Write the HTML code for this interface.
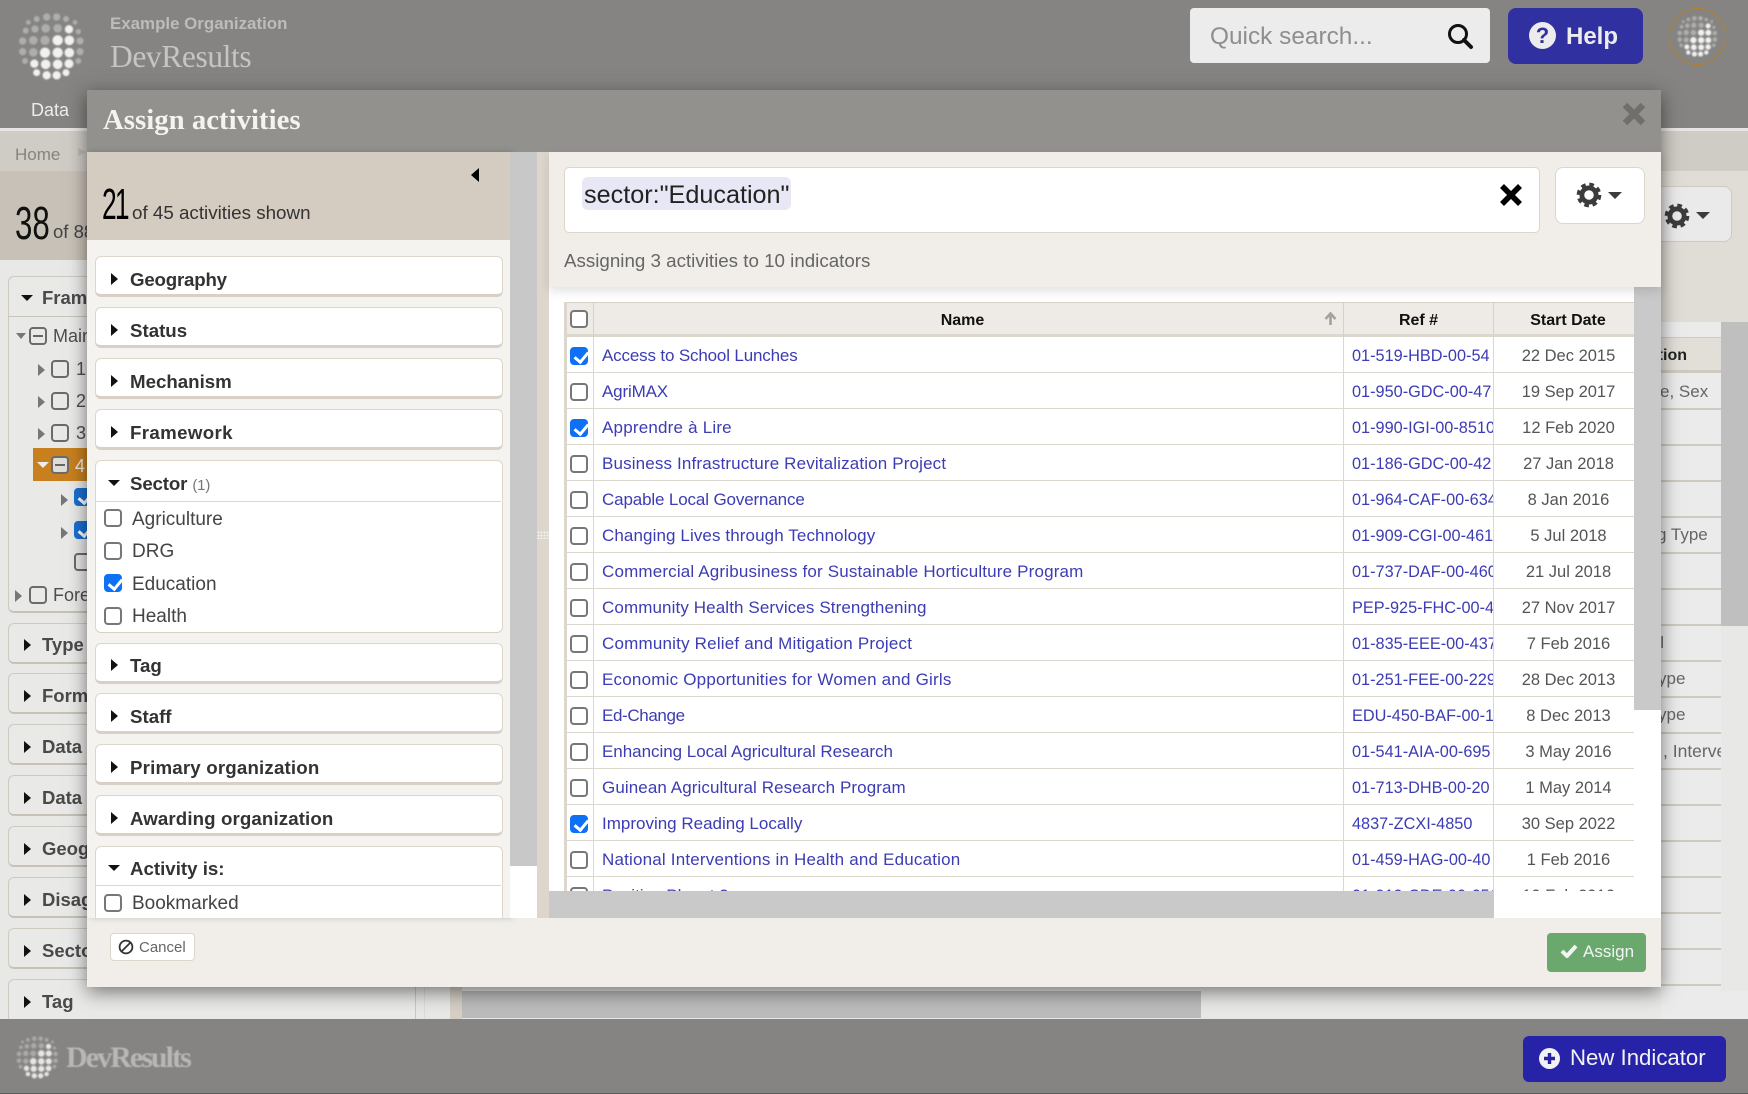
<!DOCTYPE html>
<html><head><meta charset="utf-8"><title>Assign activities</title>
<style>
*{box-sizing:border-box}
html,body{margin:0;padding:0}
body{width:1748px;height:1094px;overflow:hidden;position:relative;background:#e8e8e7;font-family:"Liberation Sans",sans-serif;color:#555}
.a{position:absolute}
.t{position:absolute;white-space:nowrap;line-height:24px;height:24px}
.slab{font-family:"Liberation Serif",serif}
.cb{position:absolute;width:18px;height:18px;border:2px solid #777;border-radius:4px;background:#fff}
.cb.on{background:#0d70f5;border-color:#0d70f5}
.cb.on:after{content:"";position:absolute;left:4.5px;top:0;width:6px;height:11px;border:solid #fff;border-width:0 3px 3px 0;transform:rotate(40deg)}
.cb.g{background:transparent;border-color:#6b6b6b}
.cb.m:after{content:"";position:absolute;left:2px;top:6px;width:10px;height:2px;background:#666}
.tr{position:absolute;width:0;height:0;border-top:6px solid transparent;border-bottom:6px solid transparent;border-left:7px solid #111}
.td{position:absolute;width:0;height:0;border-left:6px solid transparent;border-right:6px solid transparent;border-top:6px solid #111}
.p{position:absolute;left:95px;width:408px;background:#fff;border:1px solid #ddd6cb;border-bottom:3px solid #d8d0c4;border-radius:6px}
.ft{position:absolute;left:130px;font-weight:bold;font-size:18.7px;color:#333;line-height:25px;white-space:nowrap}
.lp{position:absolute;left:8px;width:408px;height:41px;background:#e9e9e8;border:1px solid #cfcac0;border-bottom:2px solid #c8c2b6;border-radius:6px}
.lt{position:absolute;left:42px;font-weight:bold;font-size:18.5px;color:#4a4a4a;line-height:24px;white-space:nowrap}
.lbl{position:absolute;left:132px;font-size:19px;color:#444;line-height:24px;white-space:nowrap}
.row{position:absolute;left:564px;width:1070px;height:36px;border-bottom:1px solid #dcd7cf;background:#fff}
.row b{position:absolute;font-weight:normal;white-space:nowrap;line-height:38px;top:0;font-size:17px}
.row .n{left:38px;color:#3c3cb4}
.row .r{left:788px;width:141px;overflow:hidden;color:#3c3cb4;font-size:16.3px}
.row .d{left:934px;width:141px;text-align:center;color:#555;font-size:16.5px}
.row i{position:absolute;top:0;height:36px;width:1px;background:#dcd7cf}
.rl{position:absolute;left:1661px;width:60px;height:2px;background:#cfcabf}
.th{font-size:16px;font-weight:bold;color:#111;text-align:center}
.logo{filter:blur(.8px)}
</style></head>
<body>
<svg width="0" height="0" style="position:absolute"><defs>
<g id="globe">
<g fill="#aeaead" stroke="#aeaead" stroke-width="2"><circle cx="80" cy="42" r="8"/><circle cx="110" cy="36" r="10"/><circle cx="140" cy="36" r="10"/><circle cx="168" cy="42" r="8"/><circle cx="55" cy="52" r="6"/><circle cx="195" cy="52" r="6"/><circle cx="47" cy="77" r="8"/><circle cx="75" cy="72" r="10"/><circle cx="107" cy="70" r="12"/><circle cx="143" cy="70" r="12"/><circle cx="205" cy="80" r="7"/><circle cx="38" cy="108" r="10"/><circle cx="70" cy="106" r="12"/><circle cx="105" cy="106" r="13"/><circle cx="210" cy="108" r="10"/><circle cx="38" cy="140" r="10"/><circle cx="70" cy="142" r="12"/><circle cx="210" cy="140" r="10"/><circle cx="45" cy="168" r="8"/><circle cx="205" cy="168" r="8"/></g>
<g fill="#f1f1f0" stroke="#f1f1f0" stroke-width="3"><circle cx="177" cy="73" r="11"/><circle cx="143" cy="106" r="14"/><circle cx="178" cy="106" r="13"/><circle cx="105" cy="143" r="14"/><circle cx="143" cy="143" r="14"/><circle cx="178" cy="143" r="13"/><circle cx="73" cy="176" r="11"/><circle cx="107" cy="178" r="13"/><circle cx="143" cy="178" r="13"/><circle cx="177" cy="176" r="12"/><circle cx="80" cy="203" r="9"/><circle cx="110" cy="211" r="11"/><circle cx="140" cy="211" r="11"/><circle cx="168" cy="203" r="9"/></g>
</g>
<g id="gear"><circle cx="12" cy="12" r="6.6" fill="none" stroke="currentColor" stroke-width="4.4"/><circle cx="12" cy="12" r="9.6" fill="none" stroke="currentColor" stroke-width="3.6" stroke-dasharray="4.2 3.34"/></g>
</defs></svg>

<!-- underlying page, dimmed -->
<div class="a" style="left:0;top:0;width:1748px;height:128px;background:#858482"></div>
<div class="a" style="left:0;top:128px;width:1748px;height:3px;background:#e6e5e3"></div>
<div class="a" style="left:0;top:131px;width:1748px;height:40px;background:#cfcbc5"></div>
<div class="a" style="left:0;top:171px;width:450px;height:89px;background:#c8c1b7"></div>
<div class="a" style="left:450px;top:171px;width:1298px;height:151px;background:#e0dcd6"></div>

<svg class="a logo" style="left:10px;top:5px" width="90" height="80" viewBox="0 0 270 240"><use href="#globe"/></svg>
<div class="t" style="left:110px;top:12px;font-size:16.9px;font-weight:bold;color:#bdbcba">Example Organization</div>
<div class="t slab" style="left:110px;top:42px;font-size:31.5px;line-height:24px;height:24px;padding-top:3px;color:#c6c5c3;letter-spacing:-.4px">DevResults</div>
<div class="t" style="left:31px;top:98px;font-size:18px;color:#ececea">Data</div>

<div class="a" style="left:1190px;top:8px;width:300px;height:55px;background:#ececec;border-radius:4px"></div>
<div class="t" style="left:1210px;top:25px;font-size:24.4px;color:#8e8e8e">Quick search...</div>
<svg class="a" style="left:1446px;top:22px" width="28" height="28" viewBox="0 0 28 28"><circle cx="12" cy="12" r="8.5" fill="none" stroke="#111" stroke-width="3"/><path d="M18 18l7 7" stroke="#111" stroke-width="4" stroke-linecap="round"/></svg>
<div class="a" style="left:1508px;top:8px;width:135px;height:56px;background:#3030a0;border-radius:8px"></div>
<div class="a" style="left:1529px;top:22px;width:27px;height:27px;border-radius:50%;background:#ececec;color:#3030a0;font-size:22px;font-weight:bold;line-height:27px;text-align:center">?</div>
<div class="t" style="left:1566px;top:25px;font-size:24px;font-weight:bold;color:#ececec">Help</div>
<div class="a" style="left:1669px;top:8px;width:57px;height:57px;border-radius:50%;border:1.5px solid #b5802f"></div>
<svg class="a logo" style="left:1672px;top:12px" width="51" height="48" viewBox="15 5 220 235"><use href="#globe"/></svg>

<div class="t" style="left:15px;top:143px;font-size:17px;color:#858481">Home</div>
<div class="a" style="left:78px;top:148px;width:0;height:0;border-left:8px solid #bcb8b1;border-top:4px solid transparent;border-bottom:4px solid transparent"></div>
<div class="t" style="left:15px;top:205px;font-size:46px;line-height:36px;height:36px;color:#111;transform:scaleX(.68);transform-origin:0 50%">38</div>
<div class="t" style="left:53px;top:220px;font-size:18.5px;color:#444">of 88</div>

<!-- underlying left -->
<div class="a" style="left:8px;top:276px;width:408px;height:337px;background:#e9e9e8;border:1px solid #cfcac0;border-bottom:2px solid #c8c2b6;border-radius:6px"></div>
<div class="a" style="left:8px;top:316px;width:408px;height:1px;background:#c9c4ba"></div>
<div class="td" style="left:21px;top:295px"></div>
<div class="lt" style="top:286px">Framework</div>
<div class="a" style="left:16px;top:333px;width:0;height:0;border-left:5px solid transparent;border-right:5px solid transparent;border-top:6px solid #777"></div>
<div class="cb g m" style="left:29px;top:327px"></div>
<div class="t" style="left:53px;top:324px;font-size:18px;color:#4e4e4e">Main</div>
<div class="tr" style="left:38px;top:364px;border-left-color:#777"></div><div class="cb g" style="left:51px;top:360px"></div><div class="t" style="left:76px;top:357px;font-size:18px;color:#4e4e4e">1</div>
<div class="tr" style="left:38px;top:396px;border-left-color:#777"></div><div class="cb g" style="left:51px;top:392px"></div><div class="t" style="left:76px;top:389px;font-size:18px;color:#4e4e4e">2</div>
<div class="tr" style="left:38px;top:428px;border-left-color:#777"></div><div class="cb g" style="left:51px;top:424px"></div><div class="t" style="left:76px;top:421px;font-size:18px;color:#4e4e4e">3</div>
<div class="a" style="left:33px;top:448px;width:60px;height:33px;background:#c8801f"></div>
<div class="a" style="left:37px;top:462px;width:0;height:0;border-left:6px solid transparent;border-right:6px solid transparent;border-top:6px solid #ececec"></div>
<div class="cb g m" style="left:51px;top:456px;background:#e0dcd6"></div>
<div class="t" style="left:75px;top:454px;font-size:18px;color:#ececea">4</div>
<div class="tr" style="left:61px;top:494px;border-left-color:#777"></div><div class="cb on" style="left:74px;top:488px;background:#1a6fd1;border-color:#1a6fd1"></div>
<div class="tr" style="left:61px;top:527px;border-left-color:#777"></div><div class="cb on" style="left:74px;top:521px;background:#1a6fd1;border-color:#1a6fd1"></div>
<div class="cb g" style="left:74px;top:553px"></div>
<div class="tr" style="left:15px;top:590px;border-left-color:#777"></div><div class="cb g" style="left:29px;top:586px"></div><div class="t" style="left:53px;top:583px;font-size:18px;color:#4e4e4e">Fore</div>

<div class="lp" style="top:623px"></div><div class="tr" style="left:24px;top:639px"></div><div class="lt" style="top:633px">Type</div>
<div class="lp" style="top:673px"></div><div class="tr" style="left:24px;top:690px"></div><div class="lt" style="top:684px">Form</div>
<div class="lp" style="top:724px"></div><div class="tr" style="left:24px;top:741px"></div><div class="lt" style="top:735px">Data</div>
<div class="lp" style="top:775px"></div><div class="tr" style="left:24px;top:792px"></div><div class="lt" style="top:786px">Data</div>
<div class="lp" style="top:826px"></div><div class="tr" style="left:24px;top:843px"></div><div class="lt" style="top:837px">Geog</div>
<div class="lp" style="top:877px"></div><div class="tr" style="left:24px;top:894px"></div><div class="lt" style="top:888px">Disag</div>
<div class="lp" style="top:928px"></div><div class="tr" style="left:24px;top:945px"></div><div class="lt" style="top:939px">Secto</div>
<div class="lp" style="top:979px;height:45px"></div><div class="tr" style="left:24px;top:996px"></div><div class="lt" style="top:990px">Tag</div>

<!-- underlying right -->
<div class="a" style="left:1661px;top:322px;width:60px;height:697px;background:#ebebeb"></div>
<div class="a" style="left:1661px;top:337px;width:60px;height:36px;background:#e2ded8;border-top:1px solid #cfcabf;border-bottom:3px solid #cfcabf"></div>
<div class="t" style="left:1640px;top:344px;width:47px;text-align:right;font-size:16px;font-weight:bold;color:#222">tion</div>
<div class="rl" style="top:408px"></div><div class="rl" style="top:444px"></div><div class="rl" style="top:480px"></div><div class="rl" style="top:516px"></div><div class="rl" style="top:552px"></div><div class="rl" style="top:588px"></div><div class="rl" style="top:624px"></div><div class="rl" style="top:660px"></div><div class="rl" style="top:696px"></div><div class="rl" style="top:732px"></div><div class="rl" style="top:768px"></div><div class="rl" style="top:804px"></div><div class="rl" style="top:840px"></div><div class="rl" style="top:876px"></div><div class="rl" style="top:912px"></div><div class="rl" style="top:948px"></div><div class="rl" style="top:984px"></div>
<div class="t" style="left:1660px;top:380px;font-size:17px;color:#666">e, Sex</div>
<div class="t" style="left:1657px;top:523px;font-size:17px;color:#666">g Type</div>
<div class="t" style="left:1644px;top:631px;font-size:17px;color:#666;width:20px;text-align:right">l</div>
<div class="t" style="left:1658px;top:667px;font-size:17px;color:#666">ype</div>
<div class="t" style="left:1658px;top:703px;font-size:17px;color:#666">ype</div>
<div class="a" style="left:1661px;top:739px;width:60px;height:24px;overflow:hidden"><div class="t" style="left:2px;top:0;font-size:17.5px;color:#666">, Interve</div></div>
<div class="a" style="left:1721px;top:322px;width:27px;height:304px;background:#bfbfbf"></div>
<div class="a" style="left:1661px;top:991px;width:87px;height:28px;background:#ebebeb"></div>
<div class="a" style="left:1661px;top:322px;width:60px;height:15px;background:#ebebeb"></div>
<div class="a" style="left:1640px;top:186px;width:92px;height:56px;background:#eaeaea;border:1px solid #cfcac0;border-radius:8px"></div>
<svg class="a" style="left:1664px;top:203px;color:#3c3c3c" width="26" height="26" viewBox="0 0 24 24"><use href="#gear"/></svg>
<div class="td" style="left:1696px;top:212px;border-left-width:7px;border-right-width:7px;border-top-width:7px;border-top-color:#3c3c3c"></div>
<div class="a" style="left:415px;top:985px;width:10px;height:34px;border-left:1px solid #ccc8bf;border-right:1px solid #dedbd6"></div>
<div class="a" style="left:450px;top:985px;width:12px;height:34px;background:#d5cfc5"></div>
<div class="a" style="left:462px;top:991px;width:739px;height:27px;background:#bcbcbc"></div>

<!-- bottom bar -->
<div class="a" style="left:0;top:1019px;width:1748px;height:75px;background:#858482"></div>
<div class="a" style="left:0;top:1093px;width:1748px;height:1px;background:#5c5c5a"></div>
<svg class="a logo" style="left:12px;top:1032px" width="51" height="51" viewBox="10 5 230 240" opacity=".9"><use href="#globe"/></svg>
<div class="t slab" style="left:66px;top:1046px;font-size:30px;font-weight:bold;color:#b8b7b5;letter-spacing:-1.95px;filter:blur(.5px)">DevResults</div>
<div class="a" style="left:1523px;top:1036px;width:203px;height:46px;background:#2723a8;border-radius:6px"></div>
<svg class="a" style="left:1539px;top:1048px" width="21" height="21" viewBox="0 0 21 21"><circle cx="10.5" cy="10.5" r="10.5" fill="#f2f2f2"/><path d="M10.5 5v11M5 10.5h11" stroke="#2723a8" stroke-width="3.4"/></svg>
<div class="t" style="left:1570px;top:1046px;font-size:22.2px;color:#f2f2f2">New Indicator</div>

<!-- MODAL -->
<div class="a" style="left:87px;top:90px;width:1574px;height:897px;background:#f1eee9;box-shadow:0 5px 18px rgba(0,0,0,.5)"></div>
<div class="a" style="left:87px;top:90px;width:1574px;height:62px;background:#92918e"></div>
<div class="t slab" style="left:103px;top:108px;font-size:28.8px;font-weight:bold;color:#f3f3f1;line-height:24px">Assign activities</div>
<svg class="a" style="left:1622px;top:102px" width="24" height="24" viewBox="0 0 24 24"><path d="M3 3l18 18M21 3L3 21" stroke="#6f6f6d" stroke-width="6.4"/></svg>

<!-- left filter pane -->
<div class="a" style="left:87px;top:152px;width:423px;height:766px;background:#f5f3f0;overflow:hidden;box-shadow:3px 0 6px rgba(0,0,0,.18)"></div>
<div class="a" style="left:87px;top:152px;width:423px;height:88px;background:#d4ccc0"></div>
<div class="a" style="left:471px;top:168px;width:0;height:0;border-top:7.5px solid transparent;border-bottom:7.5px solid transparent;border-right:8px solid #000"></div>
<div class="t" style="left:102px;top:190px;font-size:44px;line-height:30px;height:30px;color:#000;transform:scaleX(.6);transform-origin:0 50%;letter-spacing:-3px">21</div>
<div class="t" style="left:132px;top:201px;font-size:18.8px;color:#333">of 45 activities shown</div>

<div class="p" style="top:256px;height:41px"></div><div class="tr" style="left:111px;top:273px"></div><div class="ft" style="top:267px;letter-spacing:-.2px">Geography</div>
<div class="p" style="top:307px;height:41px"></div><div class="tr" style="left:111px;top:324px"></div><div class="ft" style="top:318px">Status</div>
<div class="p" style="top:358px;height:41px"></div><div class="tr" style="left:111px;top:375px"></div><div class="ft" style="top:369px">Mechanism</div>
<div class="p" style="top:409px;height:41px"></div><div class="tr" style="left:111px;top:426px"></div><div class="ft" style="top:420px;letter-spacing:.35px">Framework</div>
<div class="p" style="top:460px;height:173px;border-bottom-width:1px"></div>
<div class="a" style="left:96px;top:501px;width:405px;height:1px;background:#ddd6cb"></div>
<div class="td" style="left:108px;top:480px"></div><div class="ft" style="top:471px;letter-spacing:-.15px">Sector <span style="font-weight:normal;font-size:15px;color:#777">(1)</span></div>
<div class="cb" style="left:104px;top:509px"></div><div class="lbl" style="top:508px">Agriculture</div>
<div class="cb" style="left:104px;top:542px"></div><div class="lbl" style="top:540px">DRG</div>
<div class="cb on" style="left:104px;top:574px"></div><div class="lbl" style="top:573px">Education</div>
<div class="cb" style="left:104px;top:607px"></div><div class="lbl" style="top:605px">Health</div>
<div class="p" style="top:643px;height:41px"></div><div class="tr" style="left:111px;top:659px"></div><div class="ft" style="top:653px">Tag</div>
<div class="p" style="top:693px;height:41px"></div><div class="tr" style="left:111px;top:710px"></div><div class="ft" style="top:704px">Staff</div>
<div class="p" style="top:744px;height:41px"></div><div class="tr" style="left:111px;top:761px"></div><div class="ft" style="top:755px;letter-spacing:.18px">Primary organization</div>
<div class="p" style="top:795px;height:41px"></div><div class="tr" style="left:111px;top:812px"></div><div class="ft" style="top:806px;letter-spacing:.11px">Awarding organization</div>
<div class="p" style="top:846px;height:72px;border-bottom:0;border-radius:6px 6px 0 0"></div>
<div class="a" style="left:96px;top:885px;width:405px;height:1px;background:#ddd6cb"></div>
<div class="td" style="left:108px;top:865px"></div><div class="ft" style="top:856px">Activity is:</div>
<div class="cb" style="left:104px;top:894px"></div><div class="lbl" style="top:892px">Bookmarked</div>

<div class="a" style="left:510px;top:152px;width:27px;height:714px;background:#c8c8c8"></div>
<div class="a" style="left:510px;top:866px;width:27px;height:52px;background:#fff"></div>
<div class="a" style="left:537px;top:152px;width:12px;height:766px;background:#ddd6cc"></div>
<div class="a" style="left:537px;top:531px;width:12px;height:8px;background-image:radial-gradient(#fff 1px,transparent 1px);background-size:3px 3px;opacity:.7"></div>

<!-- right pane -->
<div class="a" style="left:549px;top:287px;width:1112px;height:631px;background:#fff"></div>
<div class="a" style="left:1634px;top:287px;width:27px;height:423px;background:#c9c9c9"></div>

<div class="a" style="left:564px;top:302px;width:1070px;height:35px;background:#eeebe6;border-top:1px solid #d6d0c6;border-bottom:3px solid #dcd7cd"></div>
<div class="a" style="left:593px;top:302px;width:1px;height:35px;background:#d6d0c6"></div>
<div class="a" style="left:1343px;top:302px;width:1px;height:35px;background:#d6d0c6"></div>
<div class="a" style="left:1493px;top:302px;width:1px;height:35px;background:#d6d0c6"></div>
<div class="cb" style="left:570px;top:310px"></div>
<div class="t th" style="left:588px;top:308px;width:749px;line-height:25px">Name</div>
<svg class="a" style="left:1324px;top:312px" width="13" height="14" viewBox="0 0 13 14"><path d="M6.5 13V2M1.5 7l5-5.5 5 5.5" fill="none" stroke="#a6a29b" stroke-width="2.6"/></svg>
<div class="t th" style="left:1344px;top:308px;width:149px;line-height:25px">Ref #</div>
<div class="t th" style="left:1498px;top:308px;width:140px;line-height:25px">Start Date</div>

<div class="a" style="left:549px;top:337px;width:1085px;height:554px;overflow:hidden">
<div style="position:absolute;left:-549px;top:-337px;width:1748px;height:1000px">
<div class="row" style="top:337px"><i style="left:29px"></i><i style="left:779px"></i><i style="left:929px"></i><span class="cb on" style="left:6px;top:10px"></span><b class="n" style="letter-spacing:-.16px">Access to School Lunches</b><b class="r">01-519-HBD-00-54</b><b class="d">22 Dec 2015</b></div>
<div class="row" style="top:373px"><i style="left:29px"></i><i style="left:779px"></i><i style="left:929px"></i><span class="cb" style="left:6px;top:10px"></span><b class="n" style="letter-spacing:-.16px">AgriMAX</b><b class="r">01-950-GDC-00-47</b><b class="d">19 Sep 2017</b></div>
<div class="row" style="top:409px"><i style="left:29px"></i><i style="left:779px"></i><i style="left:929px"></i><span class="cb on" style="left:6px;top:10px"></span><b class="n" style="letter-spacing:.2px">Apprendre à Lire</b><b class="r">01-990-IGI-00-8510</b><b class="d">12 Feb 2020</b></div>
<div class="row" style="top:445px"><i style="left:29px"></i><i style="left:779px"></i><i style="left:929px"></i><span class="cb" style="left:6px;top:10px"></span><b class="n" style="letter-spacing:.15px">Business Infrastructure Revitalization Project</b><b class="r">01-186-GDC-00-42</b><b class="d">27 Jan 2018</b></div>
<div class="row" style="top:481px"><i style="left:29px"></i><i style="left:779px"></i><i style="left:929px"></i><span class="cb" style="left:6px;top:10px"></span><b class="n" style="letter-spacing:-.14px">Capable Local Governance</b><b class="r">01-964-CAF-00-634</b><b class="d">8 Jan 2016</b></div>
<div class="row" style="top:517px"><i style="left:29px"></i><i style="left:779px"></i><i style="left:929px"></i><span class="cb" style="left:6px;top:10px"></span><b class="n" style="letter-spacing:.1px">Changing Lives through Technology</b><b class="r">01-909-CGI-00-461</b><b class="d">5 Jul 2018</b></div>
<div class="row" style="top:553px"><i style="left:29px"></i><i style="left:779px"></i><i style="left:929px"></i><span class="cb" style="left:6px;top:10px"></span><b class="n" style="letter-spacing:.167px">Commercial Agribusiness for Sustainable Horticulture Program</b><b class="r">01-737-DAF-00-460</b><b class="d">21 Jul 2018</b></div>
<div class="row" style="top:589px"><i style="left:29px"></i><i style="left:779px"></i><i style="left:929px"></i><span class="cb" style="left:6px;top:10px"></span><b class="n" style="letter-spacing:.11px">Community Health Services Strengthening</b><b class="r">PEP-925-FHC-00-48</b><b class="d">27 Nov 2017</b></div>
<div class="row" style="top:625px"><i style="left:29px"></i><i style="left:779px"></i><i style="left:929px"></i><span class="cb" style="left:6px;top:10px"></span><b class="n" style="letter-spacing:.2px">Community Relief and Mitigation Project</b><b class="r">01-835-EEE-00-437</b><b class="d">7 Feb 2016</b></div>
<div class="row" style="top:661px"><i style="left:29px"></i><i style="left:779px"></i><i style="left:929px"></i><span class="cb" style="left:6px;top:10px"></span><b class="n" style="letter-spacing:.21px">Economic Opportunities for Women and Girls</b><b class="r">01-251-FEE-00-229</b><b class="d">28 Dec 2013</b></div>
<div class="row" style="top:697px"><i style="left:29px"></i><i style="left:779px"></i><i style="left:929px"></i><span class="cb" style="left:6px;top:10px"></span><b class="n" style="letter-spacing:-.37px">Ed-Change</b><b class="r">EDU-450-BAF-00-1</b><b class="d">8 Dec 2013</b></div>
<div class="row" style="top:733px"><i style="left:29px"></i><i style="left:779px"></i><i style="left:929px"></i><span class="cb" style="left:6px;top:10px"></span><b class="n" style="letter-spacing:-.03px">Enhancing Local Agricultural Research</b><b class="r">01-541-AIA-00-695</b><b class="d">3 May 2016</b></div>
<div class="row" style="top:769px"><i style="left:29px"></i><i style="left:779px"></i><i style="left:929px"></i><span class="cb" style="left:6px;top:10px"></span><b class="n" style="letter-spacing:.09px">Guinean Agricultural Research Program</b><b class="r">01-713-DHB-00-20</b><b class="d">1 May 2014</b></div>
<div class="row" style="top:805px"><i style="left:29px"></i><i style="left:779px"></i><i style="left:929px"></i><span class="cb on" style="left:6px;top:10px"></span><b class="n">Improving Reading Locally</b><b class="r">4837-ZCXI-4850</b><b class="d">30 Sep 2022</b></div>
<div class="row" style="top:841px"><i style="left:29px"></i><i style="left:779px"></i><i style="left:929px"></i><span class="cb" style="left:6px;top:10px"></span><b class="n" style="letter-spacing:.19px">National Interventions in Health and Education</b><b class="r">01-459-HAG-00-40</b><b class="d">1 Feb 2016</b></div>
<div class="row" style="top:877px"><i style="left:29px"></i><i style="left:779px"></i><i style="left:929px"></i><span class="cb" style="left:6px;top:10px"></span><b class="n">Positive Planet 2</b><b class="r">01-919-CDE-00-651</b><b class="d">10 Feb 2016</b></div>
</div></div>
<div class="a" style="left:564px;top:302px;width:3px;height:589px;background:#dcd6cc"></div>
<div class="a" style="left:549px;top:891px;width:945px;height:27px;background:#c9c9c9"></div>

<div class="a" style="left:549px;top:152px;width:1112px;height:135px;background:#f1eee9;box-shadow:0 4px 10px rgba(0,0,0,.12)"></div>
<div class="a" style="left:564px;top:167px;width:976px;height:66px;background:#fff;border:1px solid #ddd6cb;border-radius:5px"></div>
<div class="a" style="left:582px;top:177px;width:209px;height:33px;background:#e7e7f5;border-radius:6px"></div>
<div class="t" style="left:584px;top:183px;font-size:25.2px;color:#222">sector:"Education"</div>
<svg class="a" style="left:1499px;top:183px" width="24" height="24" viewBox="0 0 24 24"><path d="M3 3l18 18M21 3L3 21" stroke="#000" stroke-width="5.6"/></svg>
<div class="a" style="left:1555px;top:167px;width:90px;height:57px;background:#fff;border:1px solid #ddd6cb;border-radius:8px"></div>
<svg class="a" style="left:1576px;top:182px;color:#3c3c3c" width="26" height="26" viewBox="0 0 24 24"><use href="#gear"/></svg>
<div class="td" style="left:1608px;top:192px;border-left-width:7px;border-right-width:7px;border-top-width:7px;border-top-color:#3c3c3c"></div>
<div class="t" style="left:564px;top:248px;font-size:18.75px;color:#666;line-height:25px">Assigning 3 activities to 10 indicators</div>

<!-- footer -->
<div class="a" style="left:110px;top:933px;width:85px;height:28px;background:#fff;border:1px solid #ddd6cb;border-radius:4px"></div>
<svg class="a" style="left:118px;top:939px" width="16" height="16" viewBox="0 0 16 16"><circle cx="8" cy="8" r="6.4" fill="none" stroke="#333" stroke-width="1.8"/><path d="M3.5 12.5l9-9" stroke="#333" stroke-width="1.8"/></svg>
<div class="t" style="left:139px;top:936px;font-size:15px;color:#666">Cancel</div>
<div class="a" style="left:1547px;top:933px;width:99px;height:39px;background:#6aa86e;border-radius:4px"></div>
<svg class="a" style="left:1560px;top:943px" width="18" height="15" viewBox="0 0 18 15"><path d="M2 8l5 5 9-10" fill="none" stroke="#f2f5f2" stroke-width="4"/></svg>
<div class="t" style="left:1583px;top:940px;font-size:17px;color:#f2f5f2">Assign</div>
</body></html>
